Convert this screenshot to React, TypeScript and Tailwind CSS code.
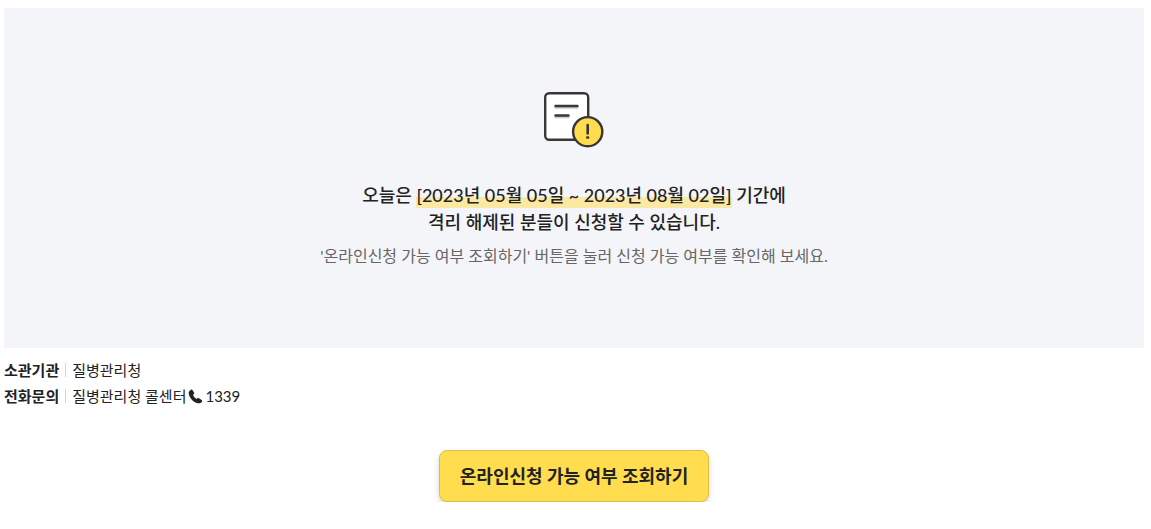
const CONTACTS: { label: string; value: string; phone?: string }[] = [
  { label: '소관기관', value: '질병관리청' },
  { label: '전화문의', value: '질병관리청 콜센터', phone: '1339' },
];

function NoticeIcon() {
  return (
    <svg width="62" height="58" viewBox="0 0 62 58" fill="none" aria-hidden="true">
      <rect x="2.2" y="2.2" width="43" height="46.5" rx="4" fill="#fff" stroke="#3a3637" strokeWidth="2.4" />
      <path d="M12.500 16.600h22M12.500 26.100h13" stroke="#ccc" strokeWidth="2.4" strokeLinecap="round" />
      <path d="M12.500 15h22M12.500 24.500h13" stroke="#3a3637" strokeWidth="2.4" strokeLinecap="round" />
      <circle cx="44.700" cy="40.700" r="14.600" fill="#ffdd4f" stroke="#3a3637" strokeWidth="2.4" />
      <path d="M44.700 34v8.500M44.300 46.500h.8" stroke="#3a3637" strokeWidth="2.6" strokeLinecap="round" />
    </svg>
  );
}

function PhoneIcon() {
  return (
    <svg width="15" height="15" viewBox="0 0 15 15" fill="#222" aria-hidden="true">
      <path d="M3 .8C3.6.4 4.2.6 4.6 1.2L6 3.5c.4.7.2 1.3-.3 1.8L5 6c.6 1.500 1.900 3 3.500 3.900l.9-.7c.5-.4 1.100-.4 1.600 0l2.600 1.800c.7.5.8 1.100.3 1.700-1 1.300-2.400 2-4.200 1.500C5.300 13.100 1.500 9 .7 4.700.5 3 1.300 1.700 3 .8Z" />
    </svg>
  );
}

export default function App() {
  return (
    <main className="pt-2 pr-[7px] pl-1 font-['Lato','Noto_Sans_CJK_KR',sans-serif] text-[#222]">
      {/* Notice */}
      <section className="flex flex-col items-center bg-[#f4f5f9] pt-[83px] pb-20 text-center">
        <NoticeIcon />
        <p className="mt-[33px] text-lg leading-[27px] font-medium">
          오늘은{' '}
          <span className="bg-linear-to-b from-transparent from-54% to-[#fbe9a3] to-54% pb-0.5">
            [2023년 05월 05일 ~ 2023년 08월 02일]
          </span>{' '}
          기간에
          <br />
          격리 해제된 분들이 신청할 수 있습니다.
        </p>
        <p className="mt-2 text-base text-[#666]">
          '온라인신청 가능 여부 조회하기' 버튼을 눌러 신청 가능 여부를 확인해 보세요.
        </p>
      </section>

      {/* Contact */}
      <dl className="mt-[9px] text-[15px] leading-[26px]">
        {CONTACTS.map((item) => (
          <div key={item.label} className="flex items-center">
            <dt className="font-bold">{item.label}</dt>
            <dd className="flex items-center">
              <span className="mx-1.5 h-3.5 w-px bg-[#d5d5d5]" />
              {item.value}
              {item.phone && (
                <a href={`tel:${item.phone}`} className="ml-0.5 flex items-center gap-0.5">
                  <PhoneIcon />
                  {item.phone}
                </a>
              )}
            </dd>
          </div>
        ))}
      </dl>

      <div className="mt-[41px] flex justify-center">
        <button
          type="button"
          className="h-[52px] rounded-lg border border-[#dbbf45] bg-[#ffdd4f] px-5 text-lg font-bold shadow-[0_3px_6px_rgba(0,0,0,0.16)]"
        >
          온라인신청 가능 여부 조회하기
        </button>
      </div>
    </main>
  );
}
